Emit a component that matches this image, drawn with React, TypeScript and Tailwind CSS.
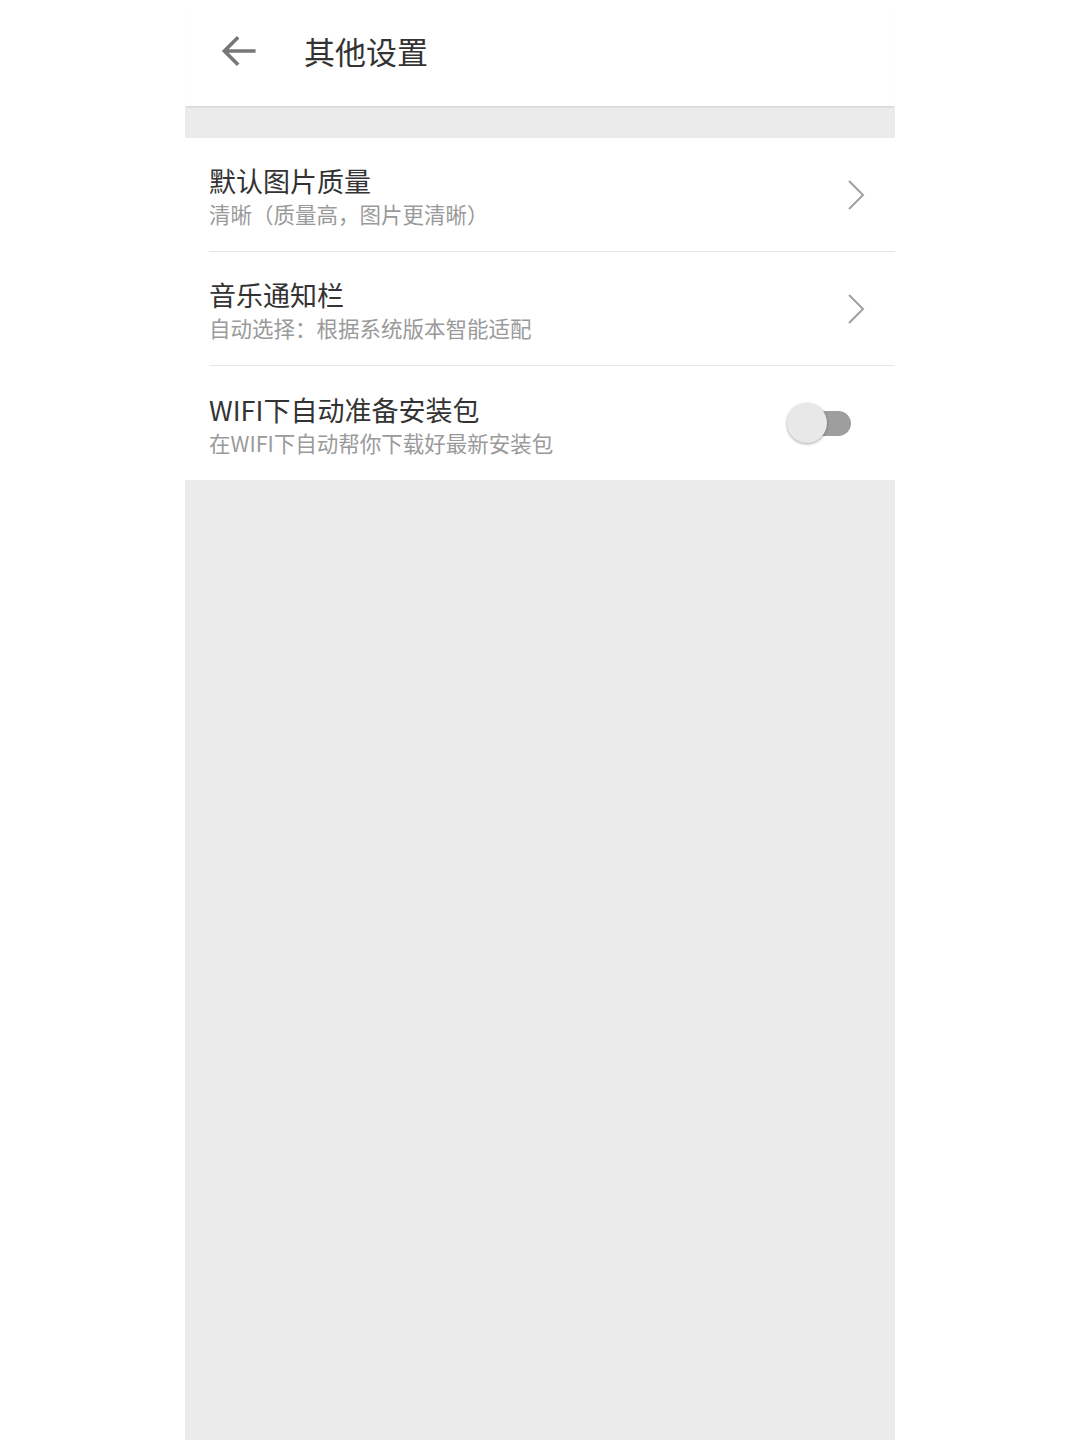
const rows = [
  { title: "默认图片质量", sub: "清晰（质量高，图片更清晰）", kind: "link" },
  { title: "音乐通知栏", sub: "自动选择：根据系统版本智能适配", kind: "link" },
  { title: "WIFI下自动准备安装包", sub: "在WIFI下自动帮你下载好最新安装包", kind: "toggle" },
];

function Toggle() {
  return (
    <div className="relative mr-[44px] h-[40px] w-[64px]">
      <div className="absolute right-0 top-[8px] h-[25px] w-[44px] rounded-full bg-[#9e9e9e]" />
      <div className="absolute left-0 top-0 h-[40px] w-[40px] rounded-full bg-[#e8e8e8] shadow-[0_1px_3px_rgba(0,0,0,0.35)]" />
    </div>
  );
}

function Chevron() {
  return (
    <svg
      width="18"
      height="32"
      viewBox="0 0 18 32"
      className="mr-[30px] text-[#a0a0a0]"
      fill="none"
      stroke="currentColor"
      strokeWidth="2"
    >
      <path d="M2 2 16 16 2 30" />
    </svg>
  );
}

export default function App() {
  return (
    <div
      className="min-h-screen bg-white"
      style={{ fontFamily: '"Noto Sans CJK SC", "Noto Sans", sans-serif' }}
    >
      <div className="mx-auto flex min-h-screen w-[710px] flex-col bg-[#ebebeb]">
        {/* Header */}
        <div className="relative z-10 flex h-[106px] items-center bg-white shadow-[0_2px_2px_-1px_rgba(0,0,0,0.12)]">
          <svg
            width="44"
            height="44"
            viewBox="0 0 24 24"
            className="mb-[4px] ml-[33px] text-[#777]"
            fill="none"
            stroke="currentColor"
            strokeWidth="2"
          >
            <path d="M20.5 12H3.5M11 4.5 3.5 12l7.5 7.5" />
          </svg>
          <h1 className="mb-[6px] ml-[42px] text-[31px] leading-none text-[#333]">其他设置</h1>
        </div>

        <div className="h-[32px]" />

        {/* List */}
        <div className="bg-white">
          {rows.map((r, i) => (
            <div key={r.title} className="pl-[24px]">
              <div
                className={`flex h-[114px] items-center justify-between ${
                  i < rows.length - 1 ? "border-b border-[#e6e6e6]" : ""
                }`}
              >
                <div className="mt-[4px] flex flex-col">
                  <span className="text-[27px] leading-[34px] text-[#333]">{r.title}</span>
                  <span className="mt-[1px] text-[21.5px] leading-[30px] text-[#9a9a9a]">{r.sub}</span>
                </div>
                {r.kind === "link" ? <Chevron /> : <Toggle />}
              </div>
            </div>
          ))}
        </div>
      </div>
    </div>
  );
}
